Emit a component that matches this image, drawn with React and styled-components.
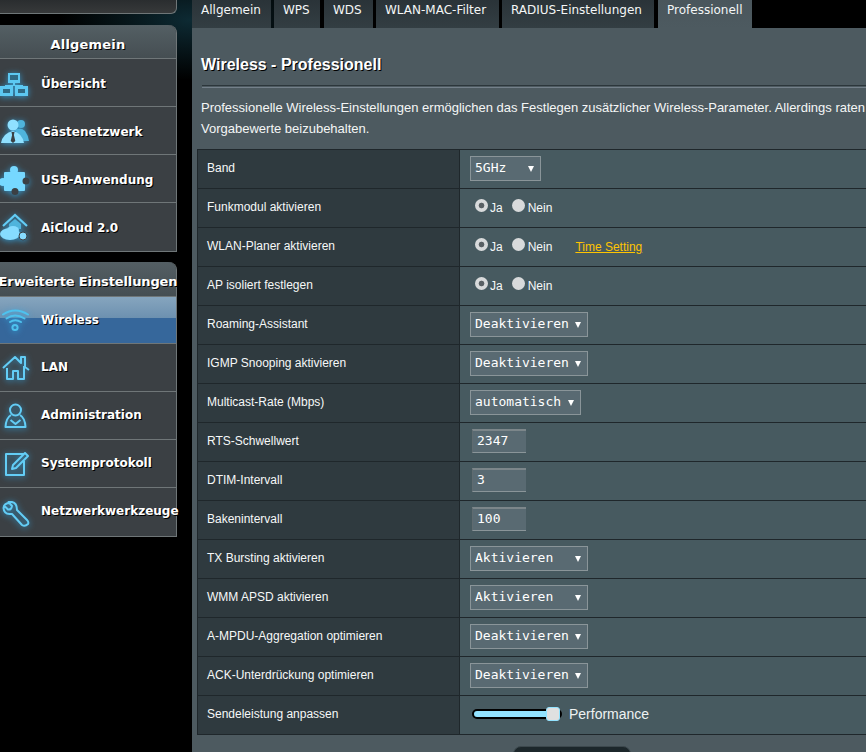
import React from "react";
import styled, { createGlobalStyle } from "styled-components";

const Global = createGlobalStyle`
  html, body { margin: 0; padding: 0; background: #000; }
  body { width: 866px; height: 752px; overflow: hidden; }
`;

const Page = styled.div`
  display: flex;
  width: 866px;
  height: 752px;
  overflow: hidden;
  background: radial-gradient(ellipse 130px 60px at 190px 20px, #0d2a33 0%, #000 100%);
  font-family: "Liberation Sans", Arial, sans-serif;
`;

const Sidebar = styled.aside`
  flex: 0 0 177px;
  width: 177px;
  display: flex;
  flex-direction: column;
`;

const TopStub = styled.div`
  height: 14px;
  box-sizing: border-box;
  background: linear-gradient(#2a2d2f, #37393a);
  border: 1px solid #6f7678;
  border-width: 0 1px 1px 0;
  border-bottom-right-radius: 6px;
  margin-bottom: 11px;
`;

const Group = styled.nav`
  border: 1px solid #6f7678;
  border-left: 0;
  border-top: 0;
  border-top-right-radius: 8px;
  margin-bottom: ${(p) => p.$after}px;
  background: #3b4044;
`;

const GroupHead = styled.div`
  height: ${(p) => p.$h}px;
  box-sizing: border-box;
  padding-top: 5px;
  border-bottom: 1px solid #6f7678;
  border-top-right-radius: 8px;
  background: linear-gradient(#545f64, #454e52);
  display: flex;
  align-items: center;
  justify-content: center;
  color: #fff;
  font: bold 13px "DejaVu Sans", Verdana, sans-serif;
  letter-spacing: ${(p) => (p.$tight ? "-0.12px" : "0.2px")};
  text-shadow: 1px 1px 0 #000;
  white-space: nowrap;
`;

const Item = styled.div`
  height: ${(p) => p.$h || 48}px;
  box-sizing: border-box;
  border-bottom: 1px solid #6f7678;
  display: flex;
  align-items: center;
  color: #fff;
  font: bold 12px "DejaVu Sans", Verdana, sans-serif;
  text-shadow: 1px 1px 0 #000;
  white-space: nowrap;
  background: ${(p) =>
    p.$active
      ? "linear-gradient(#86a5be 0%, #6d91b0 45%, #36679b 46%, #36679b 100%)"
      : "#3b4044"};
  &:last-child { border-bottom: 0; }
`;

const ItemText = styled.span`
  margin-top: ${(p) => (p.$nudge > 0 ? 2 : 0)}px;
  margin-bottom: ${(p) => (p.$nudge < 0 ? 2 : 0)}px;
`;

const IconSvg = styled.svg`
  flex: 0 0 30px;
  width: 30px;
  height: 30px;
  margin-right: 11px;
  overflow: visible;
  filter: drop-shadow(0 1px 3px rgba(50, 165, 225, 0.85));
`;

const Main = styled.main`
  flex: 0 0 720px;
  width: 720px;
  margin-left: 15px;
  display: flex;
  flex-direction: column;
`;

const Tabs = styled.div`
  display: flex;
  height: 28px;
  gap: 3px;
`;

const Tab = styled.div`
  height: 28px;
  box-sizing: border-box;
  width: ${(p) => p.$w}px;
  padding: 1px 0 0 9px;
  margin-right: ${(p) => p.$gap || 0}px;
  color: #f4f6f6;
  font: 12px/19px "DejaVu Sans", Verdana, sans-serif;
  white-space: nowrap;
  background: ${(p) => (p.$active ? "linear-gradient(#4a565c, #4d5a60)" : "linear-gradient(#2a3338, #333e43)")};
`;

const Panel = styled.section`
  flex: 1;
  background: #4d5a60;
  padding: 27px 0 0 5px;
`;

const Title = styled.h1`
  margin: 0 0 10px 4px;
  font: bold 16px/20px "Liberation Sans", Arial, sans-serif;
  color: #fff;
  text-shadow: 1px 1px 0 #000;
`;

const Rule = styled.hr`
  margin: 0 0 9px 5px;
  height: 1px;
  border: 0;
  border-top: 1px solid #2c363b;
  border-bottom: 1px solid #74808a;
`;

const Intro = styled.p`
  margin: 0 0 10px 4px;
  font: 13px/21px "Liberation Sans", Arial, sans-serif;
  color: #f4f6f6;
  white-space: nowrap;
`;

const Table = styled.table`
  border-collapse: collapse;
  table-layout: fixed;
  width: 700px;
`;

const Row = styled.tr`
  height: 39px;
`;

const Label = styled.th`
  width: 262px;
  box-sizing: border-box;
  border: 1px solid #1f272b;
  background: #2f3a3f;
  padding: 0 0 3px 9px;
  text-align: left;
  font: 12px "Liberation Sans", Arial, sans-serif;
  color: #f6f8f8;
`;

const Value = styled.td`
  border: 1px solid #1f272b;
  background: #475a60;
  padding: 0 0 0 10px;
  font: 12px "Liberation Sans", Arial, sans-serif;
  color: #f6f8f8;
`;

const SelectWrap = styled.div`
  position: relative;
  display: block;
  width: ${(p) => p.$w}px;
  height: 25px;
  margin-bottom: 1px;
  &::after {
    content: "";
    position: absolute;
    right: 7px;
    top: 10px;
    border-left: 3px solid transparent;
    border-right: 3px solid transparent;
    border-top: 6px solid #fff;
    pointer-events: none;
  }
`;

const Select = styled.select`
  appearance: none;
  display: block;
  width: 100%;
  height: 25px;
  box-sizing: border-box;
  margin: 0;
  padding: 0 0 3px 4px;
  border: 1px solid #8a9599;
  border-radius: 0;
  background: #596a72;
  color: #fff;
  font: 13px "DejaVu Sans Mono", monospace;
  outline: none;
`;

const TextInput = styled.input`
  display: block;
  width: 54px;
  height: 24px;
  box-sizing: border-box;
  margin: 0 0 2px 2px;
  padding: 0 0 2px 4px;
  border: 1px solid #8a9599;
  border-top: 2px solid #7c868a;
  border-left: 1px solid #5f6b70;
  border-right: 0;
  background: #596a72;
  color: #fff;
  font: 13px "DejaVu Sans Mono", monospace;
  outline: none;
`;

const RadioLine = styled.div`
  display: flex;
  align-items: center;
  height: 20px;
  padding: 0 0 0 5px;
`;

const RadioLabel = styled.label`
  display: inline-flex;
  align-items: center;
  margin-right: ${(p) => p.$gap}px;
  line-height: 14px;
`;

const Radio = styled.input`
  appearance: none;
  width: 13px;
  height: 13px;
  margin: 0 ${(p) => p.$after}px 3px 0;
  border-radius: 50%;
  box-sizing: border-box;
  background: ${(p) => (p.checked ? "radial-gradient(circle, #596064 0 2.5px, #d8dadb 3.2px)" : "#d8dadb")};
  transform: translateY(-1px);
`;

const TimeLink = styled.a`
  color: #ffc400;
  text-decoration: underline;
  margin-left: 23px;
`;

const SliderLine = styled.div`
  display: flex;
  align-items: center;
  padding-left: 2px;
  color: #eef2f2;
  font-size: 14px;
  height: 20px;
  margin-bottom: 2px;
`;

const Slider = styled.input`
  appearance: none;
  width: 90px;
  height: 14px;
  margin: 0 7px 0 0;
  background: transparent;
  &::-webkit-slider-runnable-track {
    height: 10px;
    box-sizing: border-box;
    background: #93e3ff;
    border: 2px solid #000;
    border-radius: 5px;
  }
  &::-webkit-slider-thumb {
    appearance: none;
    width: 14px;
    height: 14px;
    margin-top: -4px;
    box-sizing: border-box;
    background: #e0e0e0;
    border: 1px solid #93e3ff;
    border-radius: 3px;
  }
`;

const ApplyButton = styled.button`
  display: block;
  width: 118px;
  height: 40px;
  margin: 11px 0 0 316px;
  padding: 0;
  border: 1px solid #3c484d;
  border-radius: 8px 8px 0 0;
  background: #1c272b;
`;

const A = "#63cdf6";
const Icon = ({ children }) => (
  <IconSvg viewBox="0 0 30 30" aria-hidden="true">{children}</IconSvg>
);

const icons = {
  overview: (
    <Icon>
      <g fill="#5cc8f2">
        <rect x="8" y="5" width="12" height="10" />
        <rect x="0" y="18" width="13" height="10" />
        <rect x="15" y="18" width="13" height="10" />
        <path d="M13 15h2v2h8v1H5v-1h8z" />
      </g>
      <g fill="#2f6a85">
        <rect x="10" y="7" width="8" height="5" />
        <rect x="3" y="21" width="7" height="4" />
        <rect x="18" y="21" width="7" height="4" />
      </g>
    </Icon>
  ),
  guest: (
    <Icon>
      <circle cx="21" cy="8" r="4" fill="#4fb4dc" />
      <path d="M15 14 Q21 11 25 15 Q28 19 29 25 L20 25Z" fill="#4fb4dc" />
      <circle cx="13" cy="9" r="5.5" fill="#8fe0ff" />
      <path d="M1 27 Q3 17 13 15 Q22 17 24 27Z" fill="#8fe0ff" />
      <path d="M11.500 16h3l-.6 3 1.400 6-2.300 2-2.300-2 1.400-6z" fill="#3b4044" />
    </Icon>
  ),
  puzzle: (
    <Icon>
      <g fill="#76d8ff">
        <rect x="4" y="8" width="21" height="19" rx="1" />
        <circle cx="14" cy="6" r="4" />
        <circle cx="3" cy="18" r="4" />
      </g>
      <circle cx="26" cy="17" r="3.500" fill="#3b4044" />
      <circle cx="15" cy="27.500" r="3.500" fill="#3b4044" />
    </Icon>
  ),
  cloud: (
    <Icon>
      <path d="M3 14 15 3 27 14" fill="none" stroke={A} strokeWidth="2.200" />
      <path d="M9 12 15 7 21 12v5H9z" fill="#4fb4dc" />
      <g fill="#86dcff">
        <ellipse cx="10" cy="22" rx="10" ry="6" />
        <ellipse cx="13" cy="18" rx="6" ry="4" />
      </g>
      <circle cx="23" cy="24" r="4" fill="#86dcff" stroke="#3b4044" />
    </Icon>
  ),
  wifi: (
    <Icon>
      <g fill="none" stroke="#4ec2ee" strokeWidth="2" strokeLinecap="round">
        <path d="M3 9.500 Q15 1.500 28 9.500" />
        <path d="M6.500 13.500 Q15 7.500 24.500 13.500" />
        <path d="M10 17 Q15 13.500 21 17" />
        <circle cx="15" cy="22.500" r="2.600" />
      </g>
    </Icon>
  ),
  lan: (
    <Icon>
      <path d="M3 15 15 4l6 6V4h4v10l4 3M7 15v11h6v-8h5v8h6V13" fill="none" stroke={A} strokeWidth="2" strokeLinejoin="round" />
    </Icon>
  ),
  admin: (
    <Icon>
      <g fill="none" stroke={A} strokeWidth="2" strokeLinejoin="round">
        <circle cx="15.500" cy="9" r="5.500" />
        <path d="M11 14 Q6 17 5.500 26h20 Q25 17 20 14" />
        <path d="M10.500 19 15.500 23l5-4" />
      </g>
    </Icon>
  ),
  log: (
    <Icon>
      <g fill="none" stroke={A} strokeWidth="2" strokeLinejoin="round">
        <path d="M24 12v14H6V5h18" />
        <path d="M12 20l1-4L25 4l3 3-12 12z" />
      </g>
    </Icon>
  ),
  tools: (
    <Icon>
      <path d="M10 6 Q4 6 3.500 11 Q4 17 9.500 17 L12 17 L22 28 Q25 30 28 27 Q29 25 27 23 L17 13 Q17 6 12 5 L8.500 5 L12 9 Q11.500 13 8 12.500 L4.500 9" fill="none" stroke={A} strokeWidth="2" strokeLinejoin="round" />
    </Icon>
  ),
};

const tabs = [
  { t: "Allgemein", w: 79 },
  { t: "WPS", w: 46, gap: 1 },
  { t: "WDS", w: 49 },
  { t: "WLAN-MAC-Filter", w: 123 },
  { t: "RADIUS-Einstellungen", w: 152, gap: 1 },
  { t: "Professionell", w: 94, active: true },
];

const general = [
  ["Übersicht", "overview"],
  ["Gästenetzwerk", "guest"],
  ["USB-Anwendung", "puzzle"],
  ["AiCloud 2.0", "cloud"],
];
const advanced = [
  ["Wireless", "wifi", true],
  ["LAN", "lan"],
  ["Administration", "admin"],
  ["Systemprotokoll", "log"],
  ["Netzwerkwerkzeuge", "tools"],
];

const Sel = ({ w, v }) => (
  <SelectWrap $w={w}>
    <Select defaultValue={v}>
      <option>{v}</option>
    </Select>
  </SelectWrap>
);

const YesNo = ({ name, link }) => (
  <RadioLine>
    <RadioLabel $gap={9}><Radio $after={2} type="radio" name={name} checked readOnly />Ja</RadioLabel>
    <RadioLabel $gap={0}><Radio $after={3} type="radio" name={name} readOnly />Nein</RadioLabel>
    {link && <TimeLink>Time Setting</TimeLink>}
  </RadioLine>
);

const rows = [
  ["Band", <Sel w={71} v="5GHz" />],
  ["Funkmodul aktivieren", <YesNo name="a" />],
  ["WLAN-Planer aktivieren", <YesNo name="b" link />],
  ["AP isoliert festlegen", <YesNo name="c" />],
  ["Roaming-Assistant", <Sel w={118} v="Deaktivieren" />],
  ["IGMP Snooping aktivieren", <Sel w={118} v="Deaktivieren" />],
  ["Multicast-Rate (Mbps)", <Sel w={111} v="automatisch" />],
  ["RTS-Schwellwert", <TextInput defaultValue="2347" />],
  ["DTIM-Intervall", <TextInput defaultValue="3" />],
  ["Bakenintervall", <TextInput defaultValue="100" />],
  ["TX Bursting aktivieren", <Sel w={118} v="Aktivieren" />],
  ["WMM APSD aktivieren", <Sel w={118} v="Aktivieren" />],
  ["A-MPDU-Aggregation optimieren", <Sel w={118} v="Deaktivieren" />],
  ["ACK-Unterdrückung optimieren", <Sel w={118} v="Deaktivieren" />],
  [
    "Sendeleistung anpassen",
    <SliderLine><Slider type="range" min="0" max="100" defaultValue="100" />Performance</SliderLine>,
  ],
];

export default function App() {
  return (
    <Page>
      <Global />
      <Sidebar>
        <TopStub />
        <Group $after={10}>
          <GroupHead $h={34}>Allgemein</GroupHead>
          {general.map(([t, i]) => <Item key={t}>{icons[i]}<ItemText $nudge={1}>{t}</ItemText></Item>)}
        </Group>
        <Group $after={0}>
          <GroupHead $h={35} $tight>Erweiterte Einstellungen</GroupHead>
          {advanced.map(([t, i, a]) => (
            <Item key={t} $active={a} $h={a ? 47 : 48}>{icons[i]}<ItemText $nudge={a ? 0 : -1}>{t}</ItemText></Item>
          ))}
        </Group>
      </Sidebar>
      <Main>
        <Tabs>
          {tabs.map((t) => <Tab key={t.t} $w={t.w} $gap={t.gap} $active={t.active}>{t.t}</Tab>)}
        </Tabs>
        <Panel>
          <Title>Wireless - Professionell</Title>
          <Rule />
          <Intro>
            Professionelle Wireless-Einstellungen ermöglichen das Festlegen zusätzlicher Wireless-Parameter. Allerdings raten
            <br />
            Vorgabewerte beizubehalten.
          </Intro>
          <Table>
            <tbody>
              {rows.map(([l, v]) => (
                <Row key={l}><Label>{l}</Label><Value>{v}</Value></Row>
              ))}
            </tbody>
          </Table>
          <ApplyButton aria-label="Anwenden" />
        </Panel>
      </Main>
    </Page>
  );
}
